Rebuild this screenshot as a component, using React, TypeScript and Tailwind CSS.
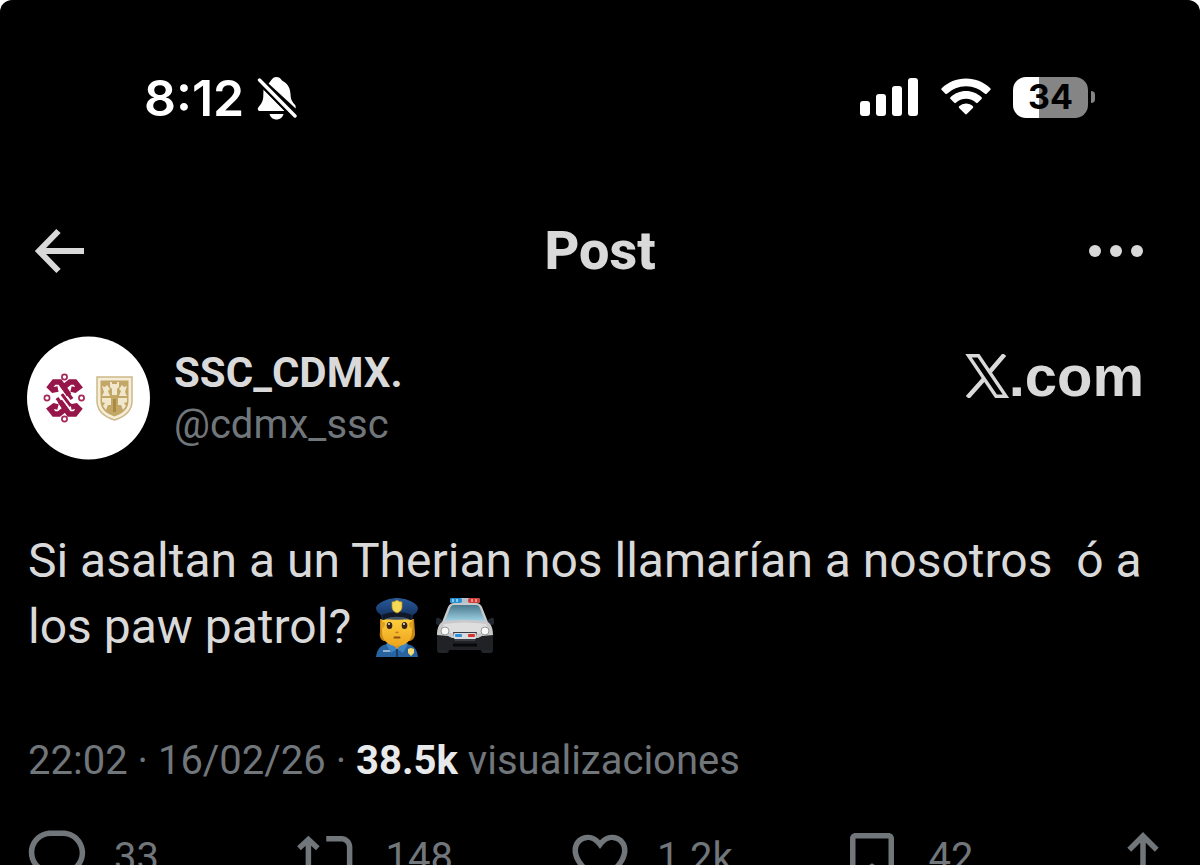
import React from 'react';

const ACTIONS = [
  {
    id: 'reply',
    label: 'Responder',
    count: '33',
    path: 'M1.751 10c0-4.42 3.584-8 8.005-8h4.366c4.49 0 8.129 3.64 8.129 8.13 0 2.96-1.607 5.68-4.196 7.11l-8.054 4.46v-3.69h-.067c-4.49.1-8.183-3.51-8.183-8.01zm8.005-6c-3.317 0-6.005 2.69-6.005 6 0 3.37 2.77 6.08 6.138 6.01l.351-.01h1.761v2.3l5.087-2.81c1.951-1.08 3.163-3.13 3.163-5.36 0-3.39-2.744-6.13-6.129-6.13H9.756z',
  },
  {
    id: 'repost',
    label: 'Repostear',
    count: '148',
    path: 'M4.5 3.88l4.1 3.84-1.364 1.46L5.5 7.55V16c0 1.1.896 2 2 2H13v2H7.5c-2.209 0-4-1.79-4-4V7.55L1.764 9.18.4 7.72 4.5 3.88zM16.5 6H11V4h5.5c2.209 0 4 1.79 4 4v8.45l1.7-1.6 1.364 1.46-4.064 3.81-4.064-3.81 1.364-1.46 1.7 1.6V8c0-1.1-.896-2-2-2z',
  },
  {
    id: 'like',
    label: 'Me gusta',
    count: '1.2k',
    path: 'M16.697 5.5c-1.222-.06-2.679.51-3.89 2.16l-.805 1.09-.806-1.09C9.984 6.01 8.526 5.44 7.304 5.5c-1.243.07-2.349.78-2.91 1.91-.552 1.12-.633 2.78.479 4.82 1.074 1.97 3.257 4.27 7.129 6.61 3.87-2.34 6.052-4.64 7.126-6.61 1.111-2.04 1.03-3.7.477-4.82-.561-1.13-1.666-1.84-2.908-1.91zm4.187 7.69c-1.351 2.48-4.001 5.12-8.379 7.67l-.503.3-.504-.3c-4.379-2.55-7.029-5.19-8.382-7.67-1.36-2.5-1.41-4.86-.514-6.67.887-1.79 2.647-2.91 4.601-3.01 1.651-.09 3.368.56 4.798 2.01 1.429-1.45 3.146-2.1 4.796-2.01 1.954.1 3.714 1.22 4.601 3.01.896 1.81.846 4.17-.514 6.67z',
  },
  {
    id: 'bookmark',
    label: 'Guardar',
    count: '42',
    path: 'M4 4.9C4 3.8 4.9 2.9 6 2.9h12c1.1 0 2 .9 2 2v16.4l-8-5.3-8 5.3V4.9zM6 4.9v12.7l6-3.7 6 3.7V4.9H6z',
  },
];

const BellOff = () => (
  <svg viewBox="0 0 40 44" className="h-11 w-10" fill="#fff" aria-hidden="true">
    <path d="M11.5 7.5C14 6 14.5 1 19.5 1c4 0 4.5 3 7 4.5C31 8 33 12 33.5 18c.2 4.5 1 7 4.2 10.500 1 1.200 1 2 1 4L11.500 7.500z" />
    <path d="M6.500 13.500L27.500 35H3c-2 0-3-2.200-1.400-4C5 27 6.300 24.500 6.300 19z" />
    <path d="M12.500 38h14c-.8 3.300-3.600 5.500-7 5.500s-6.200-2.200-7-5.500z" />
    <path d="M1.500 3.500L38.500 40.500" stroke="#000" strokeWidth="7" />
    <path d="M2.500 4L38 40" stroke="#fff" strokeWidth="3.400" strokeLinecap="round" />
  </svg>
);

const Signal = () => (
  <svg viewBox="0 0 60 40" className="h-10 w-[60px]" fill="#fff" aria-hidden="true">
    <rect x="1" y="24" width="10" height="15" rx="3" />
    <rect x="17" y="17" width="10" height="22" rx="3" />
    <rect x="33" y="9" width="10" height="30" rx="3" />
    <rect x="49" y="1" width="10" height="38" rx="3" />
  </svg>
);

const Wifi = () => (
  <svg viewBox="0 0 50 38" className="h-[38px] w-[50px]" fill="#fff" aria-hidden="true">
    <path d="M25 .5C34.500.5 43 4.200 49.300 10.200c.6.600.6 1.200 0 1.800l-3.700 3.700c-.5.500-1.100.5-1.600 0A27.500 27.500 0 0 0 25 8.200 27.500 27.500 0 0 0 6 15.700c-.5.500-1.100.5-1.600 0L.7 12c-.6-.6-.6-1.200 0-1.800C7 4.200 15.500.5 25 .5z" />
    <path d="M25 13c6 0 11.500 2.400 15.500 6.200.6.600.6 1.200 0 1.800l-3.800 3.800c-.5.500-1.100.5-1.600 0A15 15 0 0 0 25 20.700a15 15 0 0 0-10.100 4.100c-.5.500-1.100.5-1.600 0L9.500 21c-.6-.6-.6-1.200 0-1.800C13.500 15.400 19 13 25 13z" />
    <path d="M25 25.500c2.700 0 5.100 1 6.900 2.700.5.500.5 1.100 0 1.700l-6.100 6.200c-.5.500-1.100.5-1.600 0l-6.100-6.200c-.5-.6-.5-1.200 0-1.700a10 10 0 0 1 6.900-2.700z" />
  </svg>
);

const Battery = () => (
  <div className="flex items-center gap-[3px]">
    <div className="flex h-[41px] w-[75px] items-center justify-center rounded-[13px] bg-[linear-gradient(to_right,#fff_26px,#858585_26px)] font-[Inter,sans-serif] text-[34px] font-bold leading-10 text-black">
      34
    </div>
    <div className="h-3 w-1 rounded-r-full bg-[#858585]" />
  </div>
);

const Avatar = () => (
  <svg viewBox="0 0 124 124" className="h-[124px] w-[124px] shrink-0" role="img" aria-label="SSC_CDMX">
    <circle cx="62.500" cy="62" r="61.500" fill="#fff" />
    {/* Mexico City emblem */}
    <g fill="none" stroke="#96154a" strokeWidth="5.500">
      <path d="M32 53l-5 1-3-3 4-5h6l9 13" />
      <path d="M45 71l5-1 3 3-4 5h-6l-9-13" />
      <path d="M45 53l4 1 4-3-4-5h-5l-5 4" />
      <path d="M32 71l-4-1-4 3 4 5h5l5-4" />
    </g>
    <path d="M36 58l9 12M31 62l9 12M36 50l10 13" stroke="#96154a" strokeWidth="3.500" />
    <path d="M33 59l11 14M34 52l11 15" stroke="#fff" strokeWidth="1.200" />
    <g fill="#fff" stroke="#a2295a" strokeWidth="1.700">
      <circle cx="38.500" cy="41" r="2.600" />
      <circle cx="38.500" cy="83" r="2.600" />
      <circle cx="21" cy="62" r="2.600" />
      <circle cx="55.500" cy="62" r="2.600" />
    </g>
    {/* police shield */}
    <path d="M71 41h35v24c0 10-8 16-17.500 19C79 81 71 75 71 65z" fill="#f5edd8" stroke="#cdb886" strokeWidth="1.500" />
    <path d="M74.500 44.500h28V65c0 8-6 12.500-14 15.500-8-3-14-7.500-14-15.500z" fill="#c2a766" />
    <g fill="#f1e7cd">
      <path d="M84 46h2v2h5v-2h2v5l-2 2v6h-5v-6l-2-2z" />
      <path d="M76 50l3 1 2-2 3 4-2 2 2 5h-8l2-4z" />
      <path d="M101 50l-3 1-2-2-3 4 2 2-2 5h8l-2-4z" />
      <path d="M76 62h9v7h-3l-2 5-3-4 2-3-3-1z" />
      <path d="M101 62h-9v7h3l2 5 3-4-2-3 3-1z" />
    </g>
    <path d="M87 63h3v13h-3z" fill="#a98b43" />
  </svg>
);

const PoliceOfficer = () => (
  <svg viewBox="0 0 60 60" className="inline-block h-[60px] w-[60px]" role="img" aria-label="👮">
    <defs>
      <linearGradient id="face" x1="0" y1="0" x2="0" y2="1">
        <stop offset="0" stopColor="#ffcf3d" />
        <stop offset="1" stopColor="#eda51e" />
      </linearGradient>
      <linearGradient id="cap" x1="0" y1="0" x2="0" y2="1">
        <stop offset="0" stopColor="#295a9b" />
        <stop offset="1" stopColor="#112b56" />
      </linearGradient>
    </defs>
    <path d="M9 59c1-8 4-12 12-13h18c8 1 11 5 12 13z" fill="#28639f" />
    <path d="M23 39h14v9l-7 5-7-5z" fill="#dc951d" />
    <path d="M19 46l4-2 7 7 7-7 4 2-5 9-6-4-6 4z" fill="#3d84c4" />
    <path d="M30 51v8" stroke="#173d6c" strokeWidth="2" />
    <path d="M13 21h34l1 14c.4 4-2 7-5 8H17c-3-1-5-4-4-9z" fill="#c68612" />
    <path d="M15 20h30v14c0 8-6 14-15 14s-15-6-15-14z" fill="url(#face)" />
    <path d="M14 23c4 1 5 2 3 6l-3 3zM46 23c-4 1-5 2-3 6l3 3z" fill="#e1a020" />
    <ellipse cx="22.500" cy="27.500" rx="2.800" ry="3.500" fill="#382417" />
    <ellipse cx="37.500" cy="27.500" rx="2.800" ry="3.500" fill="#382417" />
    <circle cx="22" cy="26" r=".9" fill="#fff" />
    <circle cx="37" cy="26" r=".9" fill="#fff" />
    <path d="M28.500 34q1.500 1 3 0" fill="none" stroke="#bd7912" strokeWidth="1.300" />
    <path d="M27.500 39.500h5" fill="none" stroke="#8f4d17" strokeWidth="2" strokeLinecap="round" />
    <path d="M9 10C10 4 23 0 30 0s20 4 21 10c0 3-2 5-5 7l-1 5c-8-3-22-3-30 0l-1-5c-3-2-5-4-5-7z" fill="url(#cap)" />
    <path d="M15 17c8-4 22-4 30 0l-1 5c-7-2-21-2-28 0z" fill="#101827" />
    <path d="M18 21c6-3 18-3 24 0-7 1-17 1-24 0z" fill="#415268" />
    <path d="M25 4q3 0 5-2 2 2 5 2v5c0 3-2 5-5 6-3-1-5-3-5-6z" fill="#f6d954" stroke="#bd941f" strokeWidth=".7" />
    <path d="M41 51l3-1 3 1v4l-3 3-3-3z" fill="#f6dc70" />
    <path d="M16 53h7" stroke="#b8cfde" strokeWidth="1.500" />
  </svg>
);

const PoliceCar = () => (
  <svg viewBox="0 0 60 60" className="inline-block h-[60px] w-[60px]" role="img" aria-label="🚔">
    <defs>
      <linearGradient id="glass" x1="0" y1="0" x2="0" y2="1">
        <stop offset="0" stopColor="#49788d" />
        <stop offset="1" stopColor="#9ed1e4" />
      </linearGradient>
    </defs>
    <rect x="2" y="43" width="12" height="12" rx="3" fill="#22252a" />
    <rect x="46" y="43" width="12" height="12" rx="3" fill="#22252a" />
    <path d="M1 22q0-3 3-2l3 2v4l-4 1q-2 0-2-2zM59 22q0-3-3-2l-3 2v4l4 1q2 0 2-2z" fill="#22272f" />
    <path d="M13 9q2-4 6-4h22q4 0 6 4l6 15c4 3 5 8 5 13v9H2v-9c0-5 1-10 5-13z" fill="#c9c9cb" />
    <path d="M15 10q1-3 4-3h22q3 0 4 3l5 13q-20-2-40 0z" fill="url(#glass)" />
    <path d="M9 26q21-3 42 0l3 8q-24 4-48 0z" fill="#dedede" />
    <path d="M2 37l11 1 4 2h26l4-2 11-1v13q0 2-3 2H5q-3 0-3-2z" fill="#202226" />
    <path d="M18 34h24l-2 9H20z" fill="#3a3e44" />
    <circle cx="10" cy="33" r="4" fill="#f7faf7" stroke="#999" />
    <circle cx="50" cy="33" r="4" fill="#f7faf7" stroke="#999" />
    <rect x="19" y="35" width="22" height="6" rx="1" fill="#d9dadd" />
    <rect x="20" y="36" width="7" height="3" rx="1" fill="#2c91dc" />
    <rect x="33" y="36" width="7" height="3" rx="1" fill="#d9322d" />
    <path d="M18 47h24" stroke="#08090b" strokeWidth="3" />
    <rect x="15" y="0" width="30" height="5" rx="2" fill="#b8c1cc" />
    <rect x="15" y="0" width="12" height="5" rx="2" fill="#278ed1" />
    <rect x="33" y="0" width="12" height="5" rx="2" fill="#cf3e3a" />
    <path d="M18 1v3M22 1v3" stroke="#9ce2ff" strokeWidth="1.500" />
    <path d="M37 1v3M41 1v3" stroke="#ffab9b" strokeWidth="1.500" />
  </svg>
);

const XLogo = () => (
  <svg viewBox="0 0 44 44" className="h-11 w-11" fill="none" stroke="#d9d9d9" aria-hidden="true">
    <path d="M3.500 1.700h10L41 42.300H31z" strokeWidth="3.400" />
    <path d="M39.500.5L25 17.500M19 25L2.500 43.500" strokeWidth="4.500" />
  </svg>
);

export default function App() {
  return (
    <div className="h-screen overflow-hidden bg-white">
      <main className="flex min-h-full flex-col rounded-t-xl bg-black font-[Roboto,sans-serif] text-[#d9d9d9]">
        <div className="flex items-center justify-between pl-36 pr-[105px] pt-[71px] text-white">
          <div className="flex items-center gap-[13px]">
            <span className="font-[Inter,sans-serif] text-[50px] font-semibold leading-[54px]">8:12</span>
            <BellOff />
          </div>
          <div className="flex items-center gap-[22px] pb-0.5">
            <Signal />
            <Wifi />
            <Battery />
          </div>
        </div>

        <header className="mt-[94px] grid grid-cols-[1fr_auto_1fr] items-center pl-8 pr-14">
          <button type="button" aria-label="Atrás" className="justify-self-start">
            <svg viewBox="0 0 52 48" className="h-12 w-[52px]" fill="none" stroke="#d9d9d9" strokeWidth="6">
              <path d="M26.500 4L7 24l19.500 20M7 24h45" />
            </svg>
          </button>
          <h1 className="pl-6 text-[54px] font-extrabold leading-[64px]">Post</h1>
          <button type="button" aria-label="Más opciones" className="justify-self-end">
            <svg viewBox="0 0 56 14" className="h-[14px] w-14" fill="#d9d9d9">
              <circle cx="7" cy="7" r="6" />
              <circle cx="28" cy="7" r="6" />
              <circle cx="49" cy="7" r="6" />
            </svg>
          </button>
        </header>

        <article>
          <div className="mt-[53px] flex items-start pl-[26px] pr-14">
            <Avatar />
            <div className="ml-6 flex-1 pt-[9px]">
              <div className="text-[42px] font-bold leading-[56px]">SSC_CDMX.</div>
              <div className="text-[40px] leading-[48px] text-[#71767b]">@cdmx_ssc</div>
            </div>
            <a href="#" aria-label="X.com" className="flex items-center pt-2">
              <XLogo />
              <span className="font-['Liberation_Sans',sans-serif] text-[58px] font-bold leading-[64px]">.com</span>
            </a>
          </div>

          <p className="mt-[68px] whitespace-pre-wrap px-7 text-[48px] leading-[66px]">
            {'Si asaltan a un Therian nos llamarían a nosotros  ó a los paw patrol? '}
            <span className="inline-flex h-16 items-start gap-2 pl-1 align-middle">
              <PoliceOfficer />
              <PoliceCar />
            </span>
          </p>

          <div className="mt-[71px] px-7 text-[40px] leading-[56px] text-[#71767b]">
            22:02 · 16/02/26 · <strong className="font-bold text-[#e7e9ea]">38.5k</strong> visualizaciones
          </div>

          <div className="mt-9 grid grid-cols-[repeat(4,1fr)_auto] px-6 text-[40px] leading-[56px] text-[#71767b]">
            {ACTIONS.map(action => (
              <button key={action.id} type="button" aria-label={action.label} className="flex items-center gap-6">
                <svg viewBox="0 0 24 24" className="h-[66px] w-[66px]" fill="currentColor">
                  <path d={action.path} />
                </svg>
                <span>{action.count}</span>
              </button>
            ))}
            <button type="button" aria-label="Compartir">
              <svg viewBox="0 0 24 24" className="h-[66px] w-[66px]" fill="currentColor">
                <path d="M12 2.590l5.700 5.700-1.410 1.420L13 6.410V16h-2V6.410l-3.300 3.300-1.410-1.420L12 2.590zM21 15l-.02 3.510c0 1.380-1.120 2.490-2.500 2.490H5.500C4.110 21 3 19.880 3 18.500V15h2v3.500c0 .28.22.5.5.5h12.980c.28 0 .5-.22.5-.5L19 15h2z" />
              </svg>
            </button>
          </div>
        </article>
      </main>
    </div>
  );
}
